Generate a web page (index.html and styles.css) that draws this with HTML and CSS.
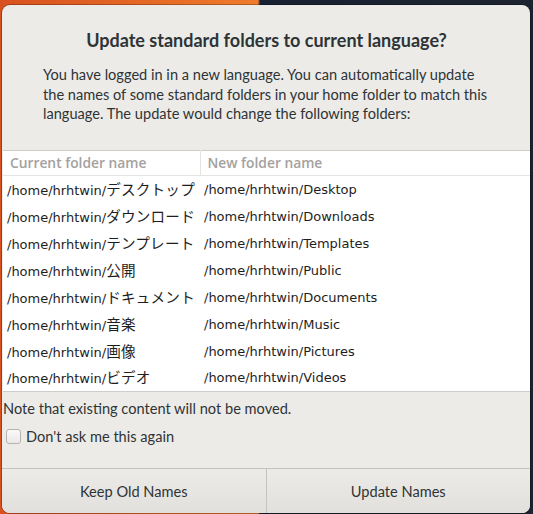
FILE: index.html
```html
<!DOCTYPE html>
<html>
<head>
  <title>xdg-user-dirs-gtk</title>
  <meta charset="utf-8">
  <link rel="stylesheet" href="styles.css">
</head>
<body>
  <div class="dialog">
    <div class="head">
      <h1 class="title">Update standard folders to current language?</h1>
      <p class="message">You have logged in in a new language. You can automatically update the names of some standard folders in your home folder to match this language. The update would change the following folders:</p>
    </div>

    <table class="folders">
      <thead>
        <tr>
          <th class="col-old">Current folder name</th>
          <th>New folder name</th>
        </tr>
      </thead>
      <tbody>
        <tr><td>/home/hrhtwin/<span class="ja">デスクトップ</span></td><td>/home/hrhtwin/Desktop</td></tr>
        <tr><td>/home/hrhtwin/<span class="ja">ダウンロード</span></td><td>/home/hrhtwin/Downloads</td></tr>
        <tr><td>/home/hrhtwin/<span class="ja">テンプレート</span></td><td>/home/hrhtwin/Templates</td></tr>
        <tr><td>/home/hrhtwin/<span class="ja">公開</span></td><td>/home/hrhtwin/Public</td></tr>
        <tr><td>/home/hrhtwin/<span class="ja">ドキュメント</span></td><td>/home/hrhtwin/Documents</td></tr>
        <tr><td>/home/hrhtwin/<span class="ja">音楽</span></td><td>/home/hrhtwin/Music</td></tr>
        <tr><td>/home/hrhtwin/<span class="ja">画像</span></td><td>/home/hrhtwin/Pictures</td></tr>
        <tr><td>/home/hrhtwin/<span class="ja">ビデオ</span></td><td>/home/hrhtwin/Videos</td></tr>
      </tbody>
    </table>

    <p class="note">Note that existing content will not be moved.</p>
    <label class="check"><span class="box"></span>Don't ask me this again</label>

    <div class="actions">
      <button class="btn">Keep Old Names</button>
      <button class="btn">Update Names</button>
    </div>
  </div>
</body>
</html>
```

FILE: styles.css
```css
*{
  padding:0;
  margin:0;
  box-sizing:border-box;
}
html,body{
  height:100%;
}
body{
  background:
    linear-gradient(90deg, #d8511f 0, #ef7b2b 258px, #182131 260px, #1d2330 100%);
  padding:5px 3px 1px 2px;
  font-family:Lato, "Noto Sans CJK JP", sans-serif;
  color:#2e3436;
  overflow:hidden;
}
.dialog{
  height:508px;
  background:#edebe8;
  border-radius:8px;
  display:flex;
  flex-direction:column;
  overflow:hidden;
  box-shadow:0 0 0 1px rgba(0,0,0,0.25);
}
.head{
  padding:23px 40px 0 41px;
  height:145px;
}
.title{
  font-size:18px;
  font-weight:bold;
  text-align:center;
  line-height:24px;
  margin-bottom:13px;
}
.message{
  font-size:14.6px;
  line-height:19.5px;
}
.folders{
  background:#fff;
  border-collapse:collapse;
  width:calc(100% - 1px);
  margin-left:1px;
  border-top:1px solid #cfcdca;
  border-bottom:1px solid #cfcdca;
  font-family:"DejaVu Sans", "Noto Sans CJK JP", sans-serif;
  font-size:13px;
  color:#1e1e1e;
}
.folders th{
  text-align:left;
  font-weight:600;
  color:#a3a19f;
  font-family:"Open Sans", "Noto Sans CJK JP", sans-serif;
  font-size:13.8px;
  height:25px;
  padding:0 7px 1px;
  border-bottom:1px solid #e6e4e1;
}
.folders th.col-old{
  width:197px;
  border-right:1px solid #e6e4e1;
}
.folders td{
  height:27px;
  line-height:20px;
  padding:1px 5px 0 4px;
  white-space:nowrap;
}
.folders .ja{
  font-family:"Noto Sans CJK JP", sans-serif;
  font-size:14.6px;
  letter-spacing:0.2px;
}
.note{
  font-size:14.6px;
  padding:7px 0 0 1px;
  line-height:20px;
}
.check{
  display:flex;
  align-items:center;
  gap:5px;
  font-size:14.6px;
  padding:9px 0 0 4px;
}
.box{
  width:15px;
  height:15px;
  border:1px solid #b6b3af;
  border-radius:3px;
  background:linear-gradient(#fafafa, #ebe9e7);
}
.actions{
  margin-top:auto;
  display:flex;
  height:45px;
  border-top:1px solid #c6c3bf;
}
.btn{
  flex:1;
  border:0;
  background:linear-gradient(#edebe8, #e2e0dd);
  font-family:Lato, sans-serif;
  font-size:14.6px;
  color:#2e3436;
}
.btn + .btn{
  border-left:1px solid #c6c3bf;
}
```
